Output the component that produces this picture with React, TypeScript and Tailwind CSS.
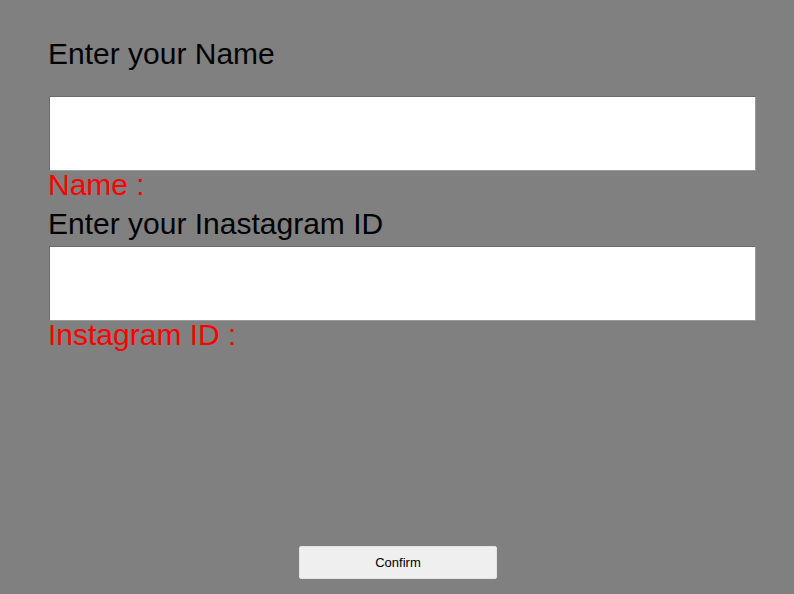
import React from "react";

export default function App() {
  return (
    <div
      className="w-full h-[594px] bg-[#808080] flex flex-col"
      style={{ fontFamily: '"Liberation Sans", Arial, sans-serif' }}
    >
      <div className="flex flex-col pl-[49px] pt-[38px]">
        <div className="-ml-[1px] text-[30px] leading-[32px] text-black">Enter your Name</div>
        <input
          type="text"
          className="mt-[26px] w-[707px] h-[75px] bg-white border border-t-[#6a6a6a] border-l-[#6a6a6a] border-r-[#9a9a9a] border-b-[#9a9a9a] outline-none"
        />
        <div className="-ml-[1px] -mt-[2px] text-[30px] leading-[32px] text-[#ff0000]">Name :</div>
        <div className="-ml-[1px] mt-[7px] text-[30px] leading-[32px] text-black">Enter your Inastagram ID</div>
        <input
          type="text"
          className="mt-[6px] w-[707px] h-[75px] bg-white border border-t-[#6a6a6a] border-l-[#6a6a6a] border-r-[#9a9a9a] border-b-[#9a9a9a] outline-none"
        />
        <div className="-ml-[1px] -mt-[2px] text-[30px] leading-[32px] text-[#ff0000]">Instagram ID :</div>
      </div>
      <div className="flex-1" />
      <div className="flex justify-center pb-[15px] pl-[2px]">
        <button
          type="button"
          className="w-[198px] h-[33px] bg-[#efefef] border border-[#e4e4e4] rounded-[2px] text-[13px] text-black"
          style={{ fontFamily: '"Liberation Sans", Arial, sans-serif' }}
        >
          Confirm
        </button>
      </div>
    </div>
  );
}
